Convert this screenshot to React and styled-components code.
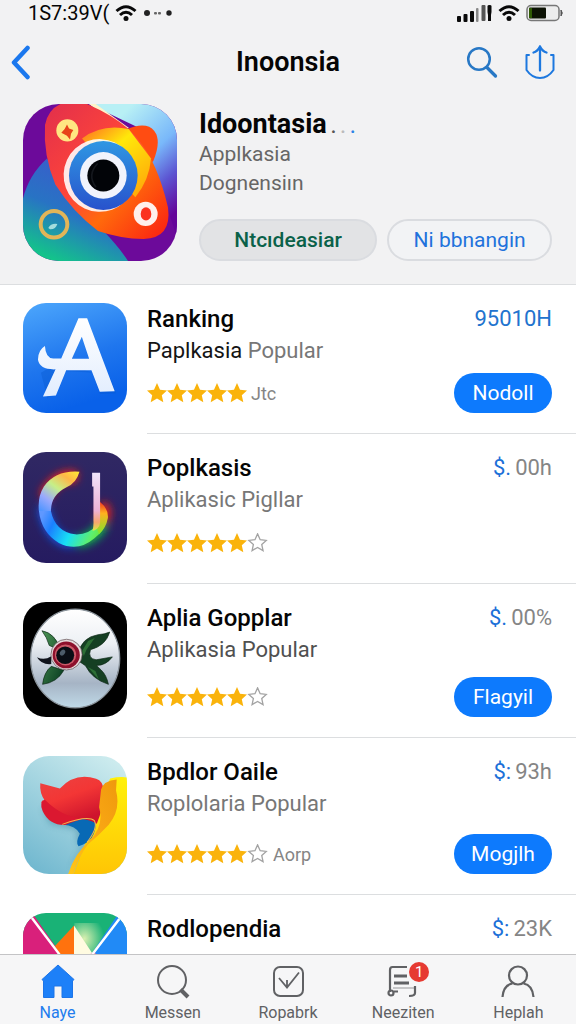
import React from "react";
import styled, { createGlobalStyle } from "styled-components";

const GlobalStyle = createGlobalStyle`
  *, *::before, *::after { box-sizing: border-box; }
  body {
    margin: 0;
    background: #fff;
    color: #050505;
    font-family: Roboto, "Liberation Sans", sans-serif;
  }
  h1, h2, p, ul { margin: 0; padding: 0; }
  ul { list-style: none; }
  button { font-family: inherit; cursor: pointer; }
  svg { display: block; flex: none; }
`;

const Screen = styled.div`
  display: flex;
  flex-direction: column;
  height: 100vh;
  overflow: hidden;
`;

const Header = styled.header`
  flex: none;
  background: #f2f2f3;
  border-bottom: 1px solid #dcdee0;
`;

const StatusBar = styled.div`
  display: flex;
  justify-content: space-between;
  align-items: center;
  height: 26px;
  padding: 0 12px 0 28px;
`;

const StatusGroup = styled.div`
  display: flex;
  align-items: center;
  gap: 6px;
`;

const Clock = styled.span`
  font-size: 20px;
  line-height: 26px;
  white-space: nowrap;
`;

const NavBar = styled.div`
  display: grid;
  grid-template-columns: 1fr auto 1fr;
  align-items: center;
  height: 72px;
  padding: 0 10px;
`;

const NavTitle = styled.h1`
  font-size: 27px;
  line-height: 32px;
  font-weight: 600;
`;

const NavActions = styled.div`
  display: flex;
  justify-content: flex-end;
  gap: 26px;
  padding-right: 10px;
`;

const IconButton = styled.button`
  width: fit-content;
  padding: 0;
  border: 0;
  background: none;
`;

const Hero = styled.section`
  display: flex;
  gap: 22px;
  padding: 6px 24px 23px 23px;
`;

const Art = styled.svg`
  width: ${(p) => p.$width}px;
  height: ${(p) => p.$height}px;
  border-radius: ${(p) => p.$radius}px;
`;

const HeroBody = styled.div`
  flex: 1;
  min-width: 0;
  padding-top: 4px;
`;

const HeroTitle = styled.h2`
  display: flex;
  gap: 4px;
  font-size: 27px;
  line-height: 32px;
  font-weight: 700;
`;

const Dot = styled.span`
  color: ${(p) => p.$color};
  font-size: 20px;
  font-weight: 500;
  line-height: 36px;
  height: 32px;
`;

const HeroLine = styled.p`
  color: #666;
  font-size: 21px;
  line-height: 29px;
`;

const HeroButtons = styled.div`
  display: flex;
  gap: 10px;
  margin-top: 21px;
`;

const PillButton = styled.button`
  flex: ${(p) => p.$grow} 1 0;
  height: 42px;
  padding: 0;
  border: 2px solid #dadce0;
  border-radius: 21px;
  background: ${(p) => (p.$filled ? "#e2e3e5" : "#f2f3f5")};
  color: ${(p) => (p.$filled ? "#0a6149" : "#2172dc")};
  font-size: 21px;
  font-weight: ${(p) => (p.$filled ? 500 : 400)};
`;

const List = styled.ul`
  flex: 1;
  min-height: 0;
  overflow-y: auto;
  scrollbar-width: none;
`;

const Row = styled.li`
  display: flex;
  gap: 20px;
  padding-left: 23px;
`;

const RowArt = styled.div`
  flex: none;
  padding: 18px 0 21px;
`;

const RowBody = styled.div`
  display: flex;
  flex: 1;
  flex-direction: column;
  min-width: 0;
  padding: 18px 24px 20px 0;
  border-bottom: 1px solid #dcdee0;
`;

const RowTop = styled.div`
  display: flex;
  justify-content: space-between;
`;

const AppName = styled.h2`
  font-size: 24px;
  line-height: 32px;
  font-weight: 500;
`;

const Price = styled.span`
  color: ${(p) => (p.$blue ? "#2173ce" : "#858585")};
  font-size: 22px;
  line-height: 32px;
`;

const Currency = styled.span`
  margin-right: 4px;
  color: #1c70d8;
`;

const Subtitle = styled.p`
  color: ${(p) => p.$color};
  font-size: 22px;
  line-height: 32px;
`;

const Strong = styled.span`
  color: #141414;
`;

const RowFoot = styled.div`
  display: flex;
  justify-content: space-between;
  align-items: center;
  height: 40px;
  margin-top: auto;
`;

const Rating = styled.div`
  display: flex;
  align-items: center;
  color: #858585;
  font-size: 18px;
`;

const RatingNote = styled.span`
  margin-left: 4px;
`;

const GetButton = styled.button`
  width: 98px;
  height: 40px;
  padding: 0;
  border: 0;
  border-radius: 20px;
  background: #0d7afd;
  color: #fff;
  font-size: 21px;
`;

const TabBar = styled.nav`
  display: grid;
  grid-template-columns: repeat(5, 1fr);
  flex: none;
  height: 70px;
  border-top: 1px solid #c4c4c6;
  background: #f6f6f7;
`;

const Tab = styled.button`
  display: flex;
  flex-direction: column;
  align-items: center;
  gap: 2px;
  padding: 7px 0 0;
  border: 0;
  background: none;
  color: ${(p) => (p.$active ? "#217cee" : "#606164")};
  font-size: 16px;
  line-height: 22px;
`;

const TabIcon = styled.span`
  position: relative;
  display: block;
`;

const Badge = styled.span`
  position: absolute;
  top: 0;
  right: -8px;
  width: 20px;
  height: 20px;
  border-radius: 10px;
  background: #e63a32;
  color: #fff;
  font-size: 15px;
  line-height: 20px;
  text-align: center;
`;

const Wifi = () => (
  <svg width="22" height="18" viewBox="0 0 22 18" fill="none" stroke="#080808" strokeWidth="3">
    <path d="M1.5 7Q11-1.5 20.500 7" />
    <path d="M5 11Q11 5.500 17 11" />
    <circle cx="11" cy="14.500" r="2.500" fill="#080808" stroke="none" />
  </svg>
);

const Dots = () => (
  <svg width="30" height="8" viewBox="0 0 30 8" fill="#222">
    <circle cx="4" cy="4" r="3" />
    <rect x="11" y="3" width="3" height="2.500" rx="1" fill="#666" />
    <rect x="15" y="3" width="3" height="2.500" rx="1" fill="#666" />
    <circle cx="26" cy="4" r="2.700" />
  </svg>
);

const Signal = () => (
  <svg width="35" height="18" viewBox="0 0 35 18" fill="#0a0a0a">
    <rect x="0" y="12" width="4" height="6" rx="1" />
    <rect x="6.500" y="10" width="4" height="8" rx="1" />
    <rect x="13" y="7" width="4" height="11" rx="1" />
    <rect x="19" y="4" width="2.500" height="14" rx="1" fill="#888" />
    <rect x="24.500" y="1" width="4" height="16" rx="1" fill="#555" />
    <path d="M30.500 2q0-1 2-1t2 1v6l-.5 3v6h-3v-6l-.5-3z" />
  </svg>
);

const Battery = () => (
  <svg width="38" height="18" viewBox="0 0 38 18">
    <rect x="1" y="1.500" width="32" height="15" rx="4" fill="#ededed" stroke="#777" strokeWidth="1.500" />
    <path d="M35 6q2.500 3 0 6z" fill="#555" stroke="#555" />
    <rect x="3" y="3.500" width="17" height="11" rx="1" fill="#0c1204" />
    <path d="M3 4h3v10H3z" fill="#305b05" />
  </svg>
);

const BackIcon = () => (
  <svg width="22" height="36" viewBox="0 0 22 36" fill="none" stroke="#1b78ee" strokeWidth="4.500" strokeLinecap="round" strokeLinejoin="round">
    <path d="M17.500 4 4 18.500 17.500 33" />
  </svg>
);

const SearchIcon = () => (
  <svg width="32" height="34" viewBox="0 0 32 34" fill="none" stroke="#2878c5" strokeWidth="2.500" strokeLinecap="round">
    <circle cx="13" cy="14" r="10.800" />
    <path d="m21 22.500 8.500 8.500" strokeWidth="3.300" />
  </svg>
);

const ShareIcon = () => (
  <svg width="32" height="36" viewBox="0 0 32 36" fill="none" stroke="#1d78df" strokeWidth="2.300" strokeLinecap="round" strokeLinejoin="round">
    <path d="M5 11H2.500v15Q8 34 16 34t13.500-8V11H27" strokeWidth="2" />
    <path d="M16 26.500V2.500M9.500 8.500q4-1 6.500-6 2.500 5 6.500 6" />
  </svg>
);

const STAR = "M10 0 13 6.700 20 7.500 14.800 12.200 16.300 19.300 10 15.600 3.700 19.300 5.200 12.200 0 7.500 7 6.700Z";

const Star = () => (
  <svg width="20" height="20" viewBox="0 0 20 20">
    <path d={STAR} fill="#fab30b" />
  </svg>
);

const EmptyStar = () => (
  <svg width="22" height="20" viewBox="-2 -1 25 23">
    <path d={STAR} fill="#fff" stroke="#a3a3a3" strokeWidth="1.500" />
  </svg>
);

const HeroArt = () => (
  <Art $width={154} $height={157} $radius={36} viewBox="38 27 462 470" preserveAspectRatio="none" aria-hidden="true">
    <defs>
      <linearGradient id="hSky" x1="0.500" y1="0" x2="1" y2="0.800">
        <stop offset="0" stopColor="#b8f0f5" /><stop offset=".45" stopColor="#79b8fa" /><stop offset=".72" stopColor="#5c55d2" /><stop offset="1" stopColor="#640499" />
      </linearGradient>
      <linearGradient id="hSea" x1=".6" y1="0" x2=".15" y2="1">
        <stop offset="0" stopColor="#3d58cc" /><stop offset=".5" stopColor="#2873c4" /><stop offset="1" stopColor="#10cf82" />
      </linearGradient>
      <linearGradient id="hRed" x1="0" y1="0" x2="1" y2="1">
        <stop offset="0" stopColor="#e22f4c" /><stop offset=".45" stopColor="#ff4638" /><stop offset=".65" stopColor="#ff6a0c" /><stop offset="1" stopColor="#fb1d12" />
      </linearGradient>
      <linearGradient id="hYellow" x1="0" y1="0" x2=".8" y2="1">
        <stop offset="0" stopColor="#ff6b23" /><stop offset=".4" stopColor="#ffe80a" /><stop offset="1" stopColor="#ffa90a" />
      </linearGradient>
      <linearGradient id="hEye" x1="0" y1="0" x2="0" y2="1">
        <stop offset="0" stopColor="#2f97e3" /><stop offset="1" stopColor="#2852cc" />
      </linearGradient>
    </defs>
    <path fill="#6c0a9a" d="M38 27h462v470H38z" />
    <path fill="url(#hSky)" d="M236 27h264v400L390 100z" />
    <path fill="#fff3c9" d="M236 27h20l100 72-20 6z" />
    <path fill="url(#hSea)" d="M110 190Q55 240 38 310v187h315Q310 430 190 320z" />
    <path fill="#ff4c12" d="M348 103q60-25 84 5 22 28-3 90l-25 20z" />
    <path fill="url(#hRed)" d="M150 27h80q75 32 125 75 65 60 100 170 10 30 18 65 12 92-73 94-70-1-137-24-76-57-128-139Q98 180 104 90q8-45 46-63z" />
    <path fill="url(#hYellow)" d="M215 130q60-45 140-28l67 88q-5 65-47 116z" />
    <ellipse cx="268" cy="241" rx="108" ry="109" fill="#fff" opacity=".88" transform="rotate(-20 268 241)" />
    <circle cx="279" cy="241" r="103" fill="url(#hEye)" />
    <circle cx="279" cy="241" r="70" fill="#f1f3fc" />
    <circle cx="279" cy="241" r="48" fill="#020408" />
    <path d="M262 205q-33 34-5 71" fill="none" stroke="#14171d" strokeWidth="5" />
    <circle cx="171" cy="106" r="33" fill="#ffe681" />
    <path fill="#e74319" d="m170 88 6 12 13 5-7 11-3 17-9-11-17-9 10-11z" />
    <circle cx="406" cy="356" r="36" fill="#fff0ec" />
    <ellipse cx="407" cy="356" rx="16" ry="20" fill="#fb321f" />
    <circle cx="131" cy="387" r="40" fill="none" stroke="#e2b558" strokeWidth="12" />
    <path fill="#a4ddde" d="M114 398q8-15 27-12-5 17-22 16z" />
  </Art>
);

const LetterArt = ({ height }) => (
  <Art $width={104} $height={height} $radius={23} viewBox="38 27 313 325" preserveAspectRatio="none" aria-hidden="true">
    <defs>
      <linearGradient id="aBg" x1="0" y1="0" x2=".3" y2="1">
        <stop offset="0" stopColor="#4da7fc" /><stop offset=".6" stopColor="#1f76ee" /><stop offset="1" stopColor="#0961e9" />
      </linearGradient>
      <linearGradient id="aFg" x1="0" y1="0" x2="0" y2="1">
        <stop offset="0" stopColor="#fff" /><stop offset="1" stopColor="#e2edfe" />
      </linearGradient>
    </defs>
    <path fill="url(#aBg)" d="M38 27h313v325H38z" />
    <path fill="#0757cc" opacity=".35" d="m112 310 40-82 95 4 23 64 48-2-17-45-154-48-55 32z" />
    <path fill="url(#aFg)" fillRule="evenodd" d="M205 72h26l83 216-45 1-25-63h-76l-31 74-39 3 38-80q-47 2-53-28 0-29 21-41 2 36 25 37h24zm10 55-30 65h52z" />
  </Art>
);

const RainbowArt = ({ height }) => (
  <Art $width={104} $height={height} $radius={23} viewBox="38 33 313 337" preserveAspectRatio="none" aria-hidden="true">
    <defs>
      <linearGradient id="rBg" x1="0" y1="0" x2="0" y2="1"><stop offset="0" stopColor="#302863" /><stop offset="1" stopColor="#251b60" /></linearGradient>
      <linearGradient id="rTop" gradientUnits="userSpaceOnUse" x1="208" y1="95" x2="110" y2="225">
        <stop offset="0" stopColor="#ffe934" /><stop offset=".22" stopColor="#ffb648" /><stop offset=".48" stopColor="#c6ef88" /><stop offset=".75" stopColor="#9baafc" /><stop offset="1" stopColor="#4f95ff" />
      </linearGradient>
      <linearGradient id="rLow" gradientUnits="userSpaceOnUse" x1="105" y1="205" x2="285" y2="290">
        <stop offset="0" stopColor="#5f98ff" /><stop offset=".2" stopColor="#1a80ff" /><stop offset=".5" stopColor="#18dff5" /><stop offset=".8" stopColor="#5cef70" /><stop offset="1" stopColor="#70df23" />
      </linearGradient>
      <linearGradient id="rEnd" x1="0" y1="0" x2="0" y2="1">
        <stop offset="0" stopColor="#f3381f" /><stop offset=".35" stopColor="#ffb01f" /><stop offset="1" stopColor="#7be62c" />
      </linearGradient>
      <linearGradient id="rBar" x1="0" y1="0" x2="0" y2="1">
        <stop offset="0" stopColor="#f0e5fb" /><stop offset=".65" stopColor="#edb2d6" /><stop offset=".85" stopColor="#f7a56e" /><stop offset="1" stopColor="#d9e84a" />
      </linearGradient>
      <filter id="rGlow" x="-.5" y="-.5" width="2" height="2"><feGaussianBlur stdDeviation="13" /></filter>
    </defs>
    <path fill="url(#rBg)" d="M38 33h313v337H38z" />
    <g filter="url(#rGlow)" fill="none" strokeWidth="34">
      <path d="M200 110q-60-15-98 60" stroke="#ff2018" />
      <path d="M99 200q20 108 92 106" stroke="#1655e5" />
      <path d="M200 306q55-8 78-55" stroke="#10b948" />
      <path d="M272 195q22 18 5 45" stroke="#f02518" />
    </g>
    <path fill="url(#rTop)" d="M208 93q-72-5-107 45-20 32-15 75h36q0-50 47-73 29-12 39-47z" />
    <path fill="url(#rLow)" d="M86 212q7 65 60 97 57 29 107-14 33-26 40-67l-32 26q-25 31-66 29-60-8-73-71z" />
    <path fill="url(#rEnd)" d="M270 185q27 22 23 50-5 28-26 48l-10-25q10-20 13-73z" />
    <path fill="url(#rBar)" d="M246 96h24v150q0 12-9 20-7 6-14 6 4-14 3-30v-104h-4z" />
  </Art>
);

const CreatureArt = ({ height }) => (
  <Art $width={104} $height={height} $radius={23} viewBox="38 34 313 352" preserveAspectRatio="none" aria-hidden="true">
    <defs>
      <linearGradient id="cDisc" x1="0" y1="0" x2="0" y2="1">
        <stop offset="0" stopColor="#fff" /><stop offset=".35" stopColor="#edf0f4" /><stop offset=".75" stopColor="#a6b4c5" /><stop offset="1" stopColor="#c0dae8" />
      </linearGradient>
      <linearGradient id="cLeaf" x1="0" y1="0" x2="1" y2="1"><stop offset="0" stopColor="#4c9555" /><stop offset="1" stopColor="#05371e" /></linearGradient>
    </defs>
    <path fill="#000" d="M38 34h313v352H38z" />
    <ellipse cx="195" cy="207" rx="134" ry="151" fill="url(#cDisc)" stroke="#8b949c" strokeWidth="4" />
    <path fill="url(#cLeaf)" stroke="#0a2414" strokeWidth="2" d="M95 122q40 7 58 61l-36-16q-7-25-22-45zM97 286q4-37 26-55l38 12q-20 37-64 43z" />
    <path fill="#10131c" d="M80 203q22 11 43-3v24q-29 3-43-21z" />
    <path fill="#153f23" stroke="#0a2414" strokeWidth="2" d="M203 195q11-53 61-61 19-1 35-8-12 42-58 54-9 27 17 31l49-9q-20 27-48 26l14 14q16 15 22 44-49-16-69-57l-20-14z" />
    <path fill="#2d6e35" d="m216 184 18-31 20-9-25 36-8 19zM233 233l23 12 10 26z" />
    <circle cx="169" cy="195" r="47" fill="#e6dadb" stroke="#56454a" strokeWidth="2" />
    <circle cx="168" cy="196" r="41" fill="#8d102c" />
    <circle cx="166" cy="196" r="32" fill="#cb5968" />
    <circle cx="165" cy="197" r="27" fill="#0a0d15" />
    <ellipse cx="157" cy="189" rx="7" ry="10" fill="#4d5b6a" transform="rotate(35 157 189)" />
  </Art>
);

const BirdArt = ({ height }) => (
  <Art $width={104} $height={height} $radius={26} viewBox="38 36 313 352" preserveAspectRatio="none" aria-hidden="true">
    <defs>
      <linearGradient id="bBg" x1=".8" y1="0" x2=".2" y2="1"><stop offset="0" stopColor="#ccebee" /><stop offset="1" stopColor="#73b9d0" /></linearGradient>
      <linearGradient id="bRed" x1="0" y1="0" x2=".5" y2="1"><stop offset="0" stopColor="#eb4342" /><stop offset=".5" stopColor="#f33635" /><stop offset="1" stopColor="#ce142d" /></linearGradient>
      <linearGradient id="bGold" x1="1" y1="0" x2="0" y2="1"><stop offset="0" stopColor="#ef980d" /><stop offset=".4" stopColor="#f8a513" /><stop offset="1" stopColor="#ffc719" /></linearGradient>
      <linearGradient id="bYellow" x1="0" y1="0" x2="0" y2="1"><stop offset="0" stopColor="#fff10a" /><stop offset="1" stopColor="#ffc505" /></linearGradient>
      <filter id="bShade"><feGaussianBlur stdDeviation="9" /></filter>
    </defs>
    <path fill="url(#bBg)" d="M38 36h313v352H38z" />
    <path fill="#397f98" opacity=".45" filter="url(#bShade)" d="m97 190 20 48 82 18 1 42 37 6-57 69 80-154z" />
    <path fill="url(#bYellow)" d="M300 103q30-6 51-3v288H190z" />
    <path fill="#0869b5" d="M156 240q68-38 101-10 2 61-52 75-10-10 4-37-10-24-53-28z" />
    <path fill="url(#bRed)" d="m90 117 59 16q46-49 109-29 22 7 22 35-1 58-20 99-40-23-103-10-52-24-64-53 3-12 12-4-18-24-15-54z" />
    <path fill="#db1830" d="M103 166q-17 11-6 34 20 43 68 42 24-10 64-21-64 6-126-55z" />
    <path fill="url(#bGold)" d="M273 136q8-27 47-30l-2 33q15 58-22 102-27 29-63 59-24 30-43 88h-16q19-62 66-101 43-44 27-98z" />
    <path d="M156 240q78-28 97-11 11 22-22 64" fill="none" stroke="#f4b84d" strokeWidth="3" />
  </Art>
);

const PrismArt = ({ height }) => (
  <Art $width={104} $height={height} $radius={23} viewBox="68 42 312 330" preserveAspectRatio="none" aria-hidden="true">
    <defs>
      <radialGradient id="pGlow" cx=".3" cy=".4" r=".6"><stop offset="0" stopColor="#d9efb0" /><stop offset="1" stopColor="#19b276" /></radialGradient>
    </defs>
    <path fill="#19b276" d="M68 42h312v330H68z" />
    <path fill="url(#pGlow)" d="M222 70h100v110h-100z" />
    <path fill="#d9207b" d="M68 42h28l89 120v210H68z" />
    <path fill="#218af6" d="M380 42h-25l-85 120v210h110z" />
    <path fill="#ff720e" d="m221 77-57 57 24 40h33z" />
    <path fill="#fffbe1" d="m221 77 62 88h-62z" />
    <path fill="#ef69a4" d="m263 162 18-13 15 20z" />
    <path d="m90 50 102 126M360 55l-99 121" fill="none" stroke="#fff" strokeWidth="7" />
  </Art>
);

const HomeIcon = () => (
  <svg width="36" height="38" viewBox="0 0 36 38">
    <path fill="#1d80f8" stroke="#1d75e8" d="M18 3 2 17.500 3.500 19v16.500h10.500V24h8v11.500h10.500V19l1.500-1.500Z" strokeLinejoin="round" />
  </svg>
);

const FindIcon = () => (
  <svg width="36" height="38" viewBox="0 0 36 38" fill="none" stroke="#606164">
    <circle cx="17" cy="18" r="14" strokeWidth="2" />
    <path d="m25.500 27.500 7.500 7.500" strokeWidth="4" />
  </svg>
);

const CheckIcon = () => (
  <svg width="36" height="38" viewBox="0 0 36 38" fill="none" stroke="#606164" strokeWidth="2">
    <rect x="4" y="5" width="29" height="29" rx="6" />
    <path d="m9 16 8 9.500 12-15M17 25V18" strokeWidth="1.800" />
  </svg>
);

const NewsIcon = () => (
  <svg width="36" height="38" viewBox="0 0 36 38" fill="none" stroke="#606164" strokeWidth="2.200">
    <path d="M22 5H7.500Q5 5 5 8v22" />
    <path d="M9 14h13M9 21h15" strokeWidth="2.800" />
    <path d="M8 26h21" stroke="#b6b6b8" strokeWidth="1.500" />
    <circle cx="6" cy="31" r="2.500" />
    <path d="M9 29.500h4M30 24v7q0 3-6 3" />
  </svg>
);

const PersonIcon = () => (
  <svg width="36" height="38" viewBox="0 0 36 38" fill="none" stroke="#606164" strokeWidth="2.200">
    <circle cx="18" cy="13.500" r="9" />
    <path d="M2.500 35q1-12 10-13.500M33.500 35q-1-12-10-13.500" />
  </svg>
);

const APPS = [
  { name: "Ranking", lead: "Paplkasia", rest: " Popular", tone: "#777", art: LetterArt, artHeight: 110, price: "95010H", action: "Nodoll", note: "Jtc" },
  { name: "Poplkasis", rest: "Aplikasic Pigllar", tone: "#777", art: RainbowArt, artHeight: 111, sign: "$.", price: "00h", emptyStar: true },
  { name: "Aplia Gopplar", rest: "Aplikasia Popular", tone: "#505050", art: CreatureArt, artHeight: 115, sign: "$.", price: "00%", action: "Flagyil", emptyStar: true },
  { name: "Bpdlor Oaile", rest: "Roplolaria Popular", tone: "#777", art: BirdArt, artHeight: 118, sign: "$:", price: "93h", action: "Mogjlh", emptyStar: true, note: "Aorp" },
  { name: "Rodlopendia", art: PrismArt, artHeight: 118, sign: "$:", price: "23K", emptyStar: true },
];

const TABS = [
  { label: "Naye", icon: HomeIcon, active: true },
  { label: "Messen", icon: FindIcon },
  { label: "Ropabrk", icon: CheckIcon },
  { label: "Neeziten", icon: NewsIcon, badge: 1 },
  { label: "Heplah", icon: PersonIcon },
];

function AppRow({ app }) {
  const Artwork = app.art;
  return (
    <Row>
      <RowArt><Artwork height={app.artHeight} /></RowArt>
      <RowBody>
        <RowTop>
          <AppName>{app.name}</AppName>
          <Price $blue={!app.sign}>
            {app.sign && <Currency>{app.sign}</Currency>}
            {app.price}
          </Price>
        </RowTop>
        {app.rest && (
          <Subtitle $color={app.tone}>
            {app.lead && <Strong>{app.lead}</Strong>}
            {app.rest}
          </Subtitle>
        )}
        <RowFoot>
          <Rating>
            {[1, 2, 3, 4, 5].map((n) => <Star key={n} />)}
            {app.emptyStar && <EmptyStar />}
            {app.note && <RatingNote>{app.note}</RatingNote>}
          </Rating>
          {app.action && <GetButton type="button">{app.action}</GetButton>}
        </RowFoot>
      </RowBody>
    </Row>
  );
}

export default function App() {
  return (
    <Screen>
      <GlobalStyle />
      <Header>
        <StatusBar>
          <StatusGroup>
            <Clock>1S7:39V(</Clock>
            <Wifi />
            <Dots />
          </StatusGroup>
          <StatusGroup>
            <Signal />
            <Wifi />
            <Battery />
          </StatusGroup>
        </StatusBar>
        <NavBar>
          <IconButton type="button" aria-label="Back"><BackIcon /></IconButton>
          <NavTitle>Inoonsia</NavTitle>
          <NavActions>
            <IconButton type="button" aria-label="Search"><SearchIcon /></IconButton>
            <IconButton type="button" aria-label="Share"><ShareIcon /></IconButton>
          </NavActions>
        </NavBar>
        <Hero>
          <HeroArt />
          <HeroBody>
            <HeroTitle>
              Idoontasia
              <Dot $color="#555">.</Dot>
              <Dot $color="#bbb">.</Dot>
              <Dot $color="#2b83e6">.</Dot>
            </HeroTitle>
            <HeroLine>Applkasia</HeroLine>
            <HeroLine>Dognensiın</HeroLine>
            <HeroButtons>
              <PillButton type="button" $grow={13} $filled>Ntcıdeasiar</PillButton>
              <PillButton type="button" $grow={12}>Ni bbnangin</PillButton>
            </HeroButtons>
          </HeroBody>
        </Hero>
      </Header>
      <List>
        {APPS.map((app) => <AppRow key={app.name} app={app} />)}
      </List>
      <TabBar>
        {TABS.map(({ label, icon: Icon, active, badge }) => (
          <Tab key={label} type="button" $active={active}>
            <TabIcon>
              <Icon />
              {badge && <Badge>{badge}</Badge>}
            </TabIcon>
            {label}
          </Tab>
        ))}
      </TabBar>
    </Screen>
  );
}
